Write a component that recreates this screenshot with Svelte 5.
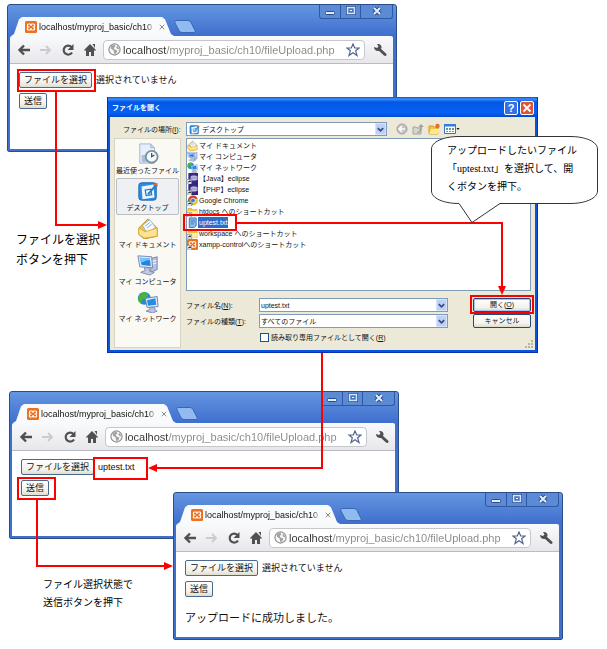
<script lang="ts">
  const host = "localhost";
  const url = host + "/myproj_basic/ch10/fileUpload.php";

  const places = [
    { icon: "recent", label: "最近使ったファイル" },
    { icon: "desktop", label: "デスクトップ" },
    { icon: "documents", label: "マイ ドキュメント" },
    { icon: "computer", label: "マイ コンピュータ" },
    { icon: "network", label: "マイ ネットワーク" },
  ];

  const files = [
    { icon: "documents", name: "マイ ドキュメント" },
    { icon: "computer", name: "マイ コンピュータ" },
    { icon: "network", name: "マイ ネットワーク" },
    { icon: "eclipse", name: "【Java】eclipse" },
    { icon: "eclipse", name: "【PHP】eclipse" },
    { icon: "chrome", name: "Google Chrome" },
    { icon: "folder", name: "htdocs へのショートカット" },
    { icon: "text", name: "uptest.txt" },
    { icon: "folder", name: "workspace へのショートカット" },
    { icon: "xampp", name: "xampp-controlへのショートカット" },
  ];

  let place = $state("デスクトップ");
  let selected = $state("uptest.txt");
</script>

{#snippet shortcut()}
  <path d="M0 14h10v10H0z" fill="#fff" stroke="#555" />
  <path d="M2 22c0-4 2-5 4-5v-2l3 3-3 3v-2c-2 0-3 1-4 3z" fill="#111" />
{/snippet}

{#snippet icon(name: string)}
  <svg class="icon" viewBox="0 0 24 24" aria-hidden="true">
    {#if name === "recent"}
      <path d="M3 1h12l4 4v17H3z" fill="#e8effa" stroke="#9db2d2" />
      <path d="M15 1v4h4" fill="#c5d5ee" stroke="#9db2d2" />
      <path d="M5 13h12v8H5z" fill="#a9bfdf" />
      <circle cx="16" cy="15" r="6.5" fill="#f3f8fa" stroke="#76909c" stroke-width="2" />
      <path d="M16 11v4l3-2" fill="none" stroke="#374b57" stroke-width="1.3" />
    {:else if name === "desktop"}
      <rect x="2" y="3" width="19" height="19" rx="3" fill="#2f8ce0" stroke="#1760ad" />
      <path d="M5 7l13-2 1 14-13 2z" fill="#e9f6ff" />
      <path d="M9 11l6-1 1 6-6 1z" fill="#fff" stroke="#287ac2" stroke-width="1.4" />
      <path d="M11 15l9-10 2 1-9 10z" fill="#297cc5" />
      <path d="M18 5l4-2 1 4z" fill="#e36d23" />
    {:else if name === "documents"}
      <path d="M2 12L12 2l10 10v9l-14 3-6-5z" fill="#efc149" stroke="#c18f24" />
      <path d="M6 9l8-6 6 8-8 8z" fill="#f5fbff" stroke="#91b8d6" />
      <path d="M9 10l5-4M11 12l5-4" stroke="#75a7cf" />
      <path d="M2 12l7 4 13-4v9L8 23l-6-4z" fill="#ffe391" stroke="#d7aa3e" />
    {:else if name === "computer"}
      <path d="M15 5l7-2v14l-7 3z" fill="#b6bfdd" stroke="#7580ac" />
      <path d="M17 8l4-1M17 11l4-1" stroke="#fff" />
      <path d="M1 2l15 1 1 12-14-1z" fill="#dee8f7" stroke="#6f86b3" />
      <path d="M3 4l11 1 1 8-10-1z" fill="#2485df" />
      <path d="M3 4l11 1v2C9 6 7 10 4 9z" fill="#73c5ff" />
      <path d="M8 15h5l1 4 5 1-5 3-10-3 5-2z" fill="#c2c9df" stroke="#7f89af" />
    {:else if name === "network"}
      <circle cx="8" cy="8" r="7" fill="#218dc9" />
      <path d="M3 3l5-2 4 3-2 4-4 1-2 5-3-4z" fill="#4cb23c" />
      <path d="M9 8l13-2 1 11-12 1z" fill="#dfe8fb" stroke="#6a7fb7" />
      <path d="M11 10l9-2 1 7-9 1z" fill="#258edf" />
      <path d="M14 18h5l1 3 2 1-5 2-7-2 4-2z" fill="#b9c2e1" stroke="#8188af" />
    {:else if name === "eclipse"}
      <path d="M3 0h21v24H3z" fill="#34277e" />
      <circle cx="15" cy="11" r="7" fill="#7b72be" />
      <path d="M8 8h15M7 11h17M8 14h15" stroke="#eeeaff" stroke-width="1.5" />
      {@render shortcut()}
    {:else if name === "chrome"}
      <circle cx="13" cy="12" r="11" fill="#eac62e" />
      <path d="M3 7a11 11 0 0120 1H13L9 15z" fill="#d93f31" />
      <path d="M3 7l6 9 5 1-3 6A11 11 0 013 7z" fill="#42a751" />
      <circle cx="13" cy="12" r="5" fill="#3c81c7" stroke="#fff" stroke-width="1.5" />
      {@render shortcut()}
    {:else if name === "folder"}
      <path d="M2 5h8l2 3h10v13H2z" fill="#efc94d" stroke="#b78c28" />
      <path d="M2 11h21l-2 10H2z" fill="#ffeb9d" />
      {@render shortcut()}
    {:else if name === "text"}
      <path d="M5 2h15v17l-4 4H5z" fill="#8bbbea" stroke="#426fae" stroke-width="2" />
      <path d="M8 7h9M8 11h9M8 15h7" stroke="#3d69a2" stroke-width="1.5" />
    {:else if name === "xampp"}
      {@render xampp()}
      {@render shortcut()}
    {/if}
  </svg>
{/snippet}

{#snippet xampp()}
  <rect width="24" height="24" rx="3" fill="#ec701f" />
  <path
    d="M7 6h3c2 0 2 2 2 4 0-2 0-4 2-4h3c3 0 3 5 0 6 3 1 3 6 0 6h-3c-2 0-2-2-2-4 0 2 0 4-2 4H7c-3 0-3-5 0-6-3-1-3-6 0-6z"
    fill="none"
    stroke="#fff"
    stroke-width="2.4"
  />
{/snippet}

{#snippet browser(id: string, fileName: string, message: string)}
  <div class="titlebar">
    <div class="tab">
      <svg class="favicon" viewBox="0 0 24 24" aria-hidden="true">{@render xampp()}</svg>
      <span class="tab-title">localhost/myproj_basic/ch10</span>
      <button class="tab-close" aria-label="タブを閉じる">
        <svg viewBox="0 0 8 8"><path d="M1 1l6 6M7 1L1 7" stroke="#888" stroke-width="1.3" /></svg>
      </button>
    </div>
    <button class="new-tab" aria-label="新しいタブ">
      <svg viewBox="0 0 22 13">
        <path d="M2 .5h12q2 0 3 2l4 8q1 2-1 2H8q-2 0-3-2L1 3Q0 .5 2 .5z" fill="#91baf0" stroke="#3868b5" />
      </svg>
    </button>
    <div class="controls">
      <button aria-label="最小化">
        <svg viewBox="0 0 12 12"><rect x="1.5" y="6.5" width="9" height="3" rx="1" fill="#e5eefc" stroke="#284d8d" /></svg>
      </button>
      <button aria-label="最大化">
        <svg viewBox="0 0 12 12">
          <rect x="2.5" y="2.5" width="7" height="6" fill="none" stroke="#284d8d" stroke-width="3" />
          <rect x="2.5" y="2.5" width="7" height="6" fill="#4878c4" stroke="#d5e4fb" stroke-width="1.5" />
          <path d="M5 5.5h2" stroke="#fff" />
        </svg>
      </button>
      <button class="wide" aria-label="閉じる">
        <svg viewBox="0 0 12 12">
          <path d="M3 3l6 6M9 3L3 9" stroke="#284d8d" stroke-width="4" />
          <path d="M3 3l6 6M9 3L3 9" stroke="#e5eefc" stroke-width="2" />
        </svg>
      </button>
    </div>
  </div>
  <div class="toolbar">
    <button class="tool" aria-label="戻る">
      <svg viewBox="0 0 14 14"><path d="M7 2.5L2.5 7 7 11.5M3 7h10" fill="none" stroke="#505050" stroke-width="2.4" /></svg>
    </button>
    <button class="tool" aria-label="進む">
      <svg viewBox="0 0 14 14"><path d="M7 3l4 4-4 4M1 7h10" fill="none" stroke="#cbcbcf" stroke-width="1.8" /></svg>
    </button>
    <button class="tool" aria-label="再読み込み">
      <svg viewBox="0 0 14 14">
        <path d="M10.5 4A4.5 4.5 0 1011 9.5" fill="none" stroke="#505050" stroke-width="2.2" />
        <path d="M12.5 1v6h-6z" fill="#505050" />
      </svg>
    </button>
    <button class="tool" aria-label="ホーム">
      <svg viewBox="0 0 14 14">
        <path d="M7 1l6 6-1 1-1-1v6H8V9H6v4H3V7L2 8 1 7z" fill="#505050" />
        <path d="M9.5 1H12v4z" fill="#505050" />
      </svg>
    </button>
    <div class="omnibox">
      <svg class="globe" viewBox="0 0 14 14" aria-hidden="true">
        <circle cx="7" cy="7" r="6" fill="#f7f7f7" stroke="#929292" stroke-width="1.3" />
        <path d="M3 3l4-1 1 2-2 1 1 2 3 1-1 3-2 1-1-4-3-2z" fill="#a1a1a1" />
        <path d="M10 3l2 3-1 1-2-2z" fill="#a1a1a1" />
      </svg>
      <input class="url" aria-label="アドレス" value={url} />
      <button class="star" aria-label="ブックマーク">
        <svg viewBox="0 0 14 14">
          <path d="M7 1l1.7 4H13L9.7 7.8 11 12.5 7 9.8 3 12.5l1.3-4.7L1 5h4.3z" fill="#fff" stroke="#53648d" stroke-width="1.2" />
        </svg>
      </button>
    </div>
    <button class="tool" aria-label="設定">
      <svg viewBox="0 0 14 14">
        <path d="M6 6l6 5.5" stroke="#505050" stroke-width="3" stroke-linecap="round" />
        <path d="M1 4l3 1 1.5-1.5L4 1c3-.5 5 1.5 4.5 4L6 8C3.5 8.5 1 7 1 4z" fill="#505050" />
      </svg>
    </button>
  </div>
  <form class="page" onsubmit={(e) => e.preventDefault()}>
    <div class="file-row">
      <button type="button" class="page-button" aria-describedby={id}>ファイルを選択</button>
      <output {id}>{fileName}</output>
    </div>
    <button class="page-button">送信</button>
    {#if message}
      <p class="message">{message}</p>
    {/if}
  </form>
{/snippet}

{#snippet arrow()}
  <span class="drop" aria-hidden="true">
    <svg viewBox="0 0 10 10"><path d="M2 3.5l3 3 3-3" fill="none" stroke="#344f80" stroke-width="2" /></svg>
  </span>
{/snippet}

<main>
  <section class="window first">
    {@render browser("file-first", "選択されていません", "")}
  </section>

  <section class="dialog" aria-labelledby="dialog-title">
    <header>
      <h1 id="dialog-title">ファイルを開く</h1>
      <button class="help" aria-label="ヘルプ">?</button>
      <button class="close" aria-label="閉じる">
        <svg viewBox="0 0 12 12"><path d="M2.5 2.5l7 7M9.5 2.5l-7 7" stroke="#fff" stroke-width="1.8" /></svg>
      </button>
    </header>

    <div class="dialog-body">
      <div class="location">
        <label for="place">ファイルの場所(<u>I</u>):</label>
        <div class="combo">
          {@render icon("desktop")}
          <select id="place" bind:value={place}>
            <option>デスクトップ</option>
          </select>
          {@render arrow()}
        </div>
        <div class="nav">
          <button aria-label="前に戻る">
            <svg viewBox="0 0 12 12">
              <circle cx="6" cy="6" r="5" fill="#c4c3bd" stroke="#a3a29c" />
              <path d="M6 3L3 6l3 3M3 6h6" fill="none" stroke="#fff" stroke-width="1.5" />
            </svg>
          </button>
          <button aria-label="一つ上へ">
            <svg viewBox="0 0 12 12">
              <path d="M1 4h3l1 1h4v6H1z" fill="#d6d5ce" stroke="#a5a49d" />
              <path d="M5 9c2 0 3-2 3-5H6l3-3 3 3h-2c0 4-2 6-5 6z" fill="#a5a49d" />
            </svg>
          </button>
          <button aria-label="新しいフォルダ">
            <svg viewBox="0 0 12 12">
              <path d="M1 3h4l1 1h4v7H1z" fill="#f2c347" stroke="#d79c24" />
              <path d="M3 6h9l-2 5H1z" fill="#ffe98d" />
              <circle cx="9.5" cy="3" r="2.2" fill="#ed6930" />
            </svg>
          </button>
          <button class="view" aria-label="表示">
            <svg viewBox="0 0 16 12">
              <path d="M.5 1.5h11v9H.5z" fill="#fff" stroke="#3a6fbd" />
              <path d="M0 1h12v2.5H0z" fill="#347bdc" />
              <path d="M2 5h2v2H2zM5 5h2v2H5zM8 5h2v2H8zM2 8h2v1H2zM5 8h2v1H5zM8 8h2v1H8z" fill="#609b91" />
              <path d="M12.5 5h3L14 7z" fill="#111" />
            </svg>
          </button>
        </div>
      </div>

      <nav class="places">
        {#each places as item}
          <button class:active={item.label === place}>
            {@render icon(item.icon)}
            <span>{item.label}</span>
          </button>
        {/each}
      </nav>

      <div class="main-area">
        <ul class="files">
          {#each files as file}
            <li>
              <button class:selected={file.name === selected} onclick={() => (selected = file.name)}>
                {@render icon(file.icon)}
                <span>{file.name}</span>
              </button>
            </li>
          {/each}
        </ul>

        <div class="fields">
          <label for="file-name">ファイル名(<u>N</u>):</label>
          <div class="combo">
            <input id="file-name" bind:value={selected} />
            {@render arrow()}
          </div>
          <button class="dialog-button default">開く(<u>O</u>)</button>

          <label for="file-type">ファイルの種類(<u>T</u>):</label>
          <div class="combo">
            <select id="file-type">
              <option>すべてのファイル</option>
            </select>
            {@render arrow()}
          </div>
          <button class="dialog-button">キャンセル</button>

          <label class="readonly">
            <input type="checkbox" />
            読み取り専用ファイルとして開く(<u>R</u>)
          </label>
        </div>
      </div>
    </div>
    <svg class="grip" viewBox="0 0 8 8" aria-hidden="true">
      <path d="M6 0h2v2H6zM3 3h2v2H3zM6 3h2v2H6zM0 6h2v2H0zM3 6h2v2H3zM6 6h2v2H6z" fill="#b8b4a2" />
    </svg>
  </section>

  <section class="window second">
    {@render browser("file-second", "uptest.txt", "")}
  </section>

  <!-- arrows and highlight frames below the last window -->
  <svg class="marks" aria-hidden="true">
    <rect x="18" y="70" width="77" height="21" />
    <path d="M56 91V225H100" />
    <path class="head" d="M107 225l-9-4v8z" />
    <rect x="184" y="215" width="52" height="15" />
    <path d="M237 223H502V288" />
    <path class="head" d="M502 295l-4-9h8z" />
    <rect x="471" y="296" width="62" height="17" />
    <path d="M322 353V468H155" />
    <path class="head" d="M148 468l9-4v8z" />
    <rect x="94" y="458" width="53" height="21" />
    <rect x="18" y="478" width="37" height="21" />
    <path d="M37 500V566H166" />
    <path class="head" d="M173 566l-9-4v8z" />
  </svg>

  <section class="window third">
    {@render browser("file-third", "選択されていません", "アップロードに成功しました。")}
  </section>

  <p class="caption choose">ファイルを選択<br />ボタンを押下</p>
  <p class="caption send">ファイル選択状態で<br />送信ボタンを押下</p>

  <aside class="callout">
    <svg viewBox="0 0 167 88" aria-hidden="true">
      <path
        d="M28 .5H139C155 .5 166.500 6 166.500 13V55C166.500 62 155 67.500 139 67.500H69L41 86.500 28 67.500C12 67.500 .5 62 .5 55V13C.5 6 12 .5 28 .5z"
        fill="#fff"
        stroke="#333"
      />
    </svg>
    <p>アップロードしたいファイル<br />「uptest.txt」を選択して、開<br />くボタンを押下。</p>
  </aside>
</main>

<style>
  :global(body) {
    background: #fff;
  }

  main {
    position: relative;
    min-height: 649px;
    overflow: hidden;
    font-family: "Liberation Sans", "Noto Sans CJK JP", sans-serif;
    color: #111;
  }

  main :global(*) {
    box-sizing: border-box;
  }

  button,
  input,
  select {
    margin: 0;
    padding: 0;
    border: 0;
    background: none;
    font: inherit;
    color: inherit;
    outline: none;
  }

  svg {
    display: block;
  }

  p,
  h1,
  ul {
    margin: 0;
    padding: 0;
  }

  /* browser windows */
  .window {
    position: absolute;
    display: flex;
    flex-direction: column;
    width: 390px;
    min-height: 148px;
    padding: 0 3px 2px 2px;
    border: 1px solid #2b4d8b;
    border-radius: 3px 3px 2px 2px;
    background: linear-gradient(#6496e0, #4070ce 30px);
  }

  .first {
    left: 7px;
    top: 4px;
  }

  .second {
    left: 9px;
    top: 391px;
  }

  .third {
    left: 173px;
    top: 492px;
  }

  .titlebar {
    display: flex;
    align-items: flex-end;
    height: 31px;
    padding-left: 1px;
  }

  .tab {
    display: flex;
    align-items: center;
    gap: 2px;
    width: 163px;
    height: 19px;
    padding: 0 7px 0 14px;
    background: #f9fafc;
    clip-path: polygon(0 100%, 3px 90%, 8px 12%, 11px 0, calc(100% - 12px) 0, calc(100% - 9px) 12%, calc(100% - 3px) 90%, 100% 100%);
  }

  .favicon {
    flex: none;
    width: 12px;
    height: 12px;
  }

  .tab-title {
    flex: 1;
    white-space: nowrap;
    font-size: 9px;
    line-height: 12px;
    mask-image: linear-gradient(to right, #000 92%, transparent);
  }

  .tab-close {
    flex: none;
    width: 10px;
    padding: 2px;
  }

  .new-tab {
    width: 22px;
    margin-bottom: 3px;
  }

  .controls {
    display: flex;
    align-self: flex-start;
    margin-left: auto;
    border: 1px solid #2f58a2;
    border-top: 0;
    border-radius: 0 0 3px 3px;
    background: #5c8bd6;
  }

  .controls button {
    display: flex;
    justify-content: center;
    width: 20px;
    height: 13px;
  }

  .controls button + button {
    border-left: 1px solid #2f58a2;
  }

  .controls .wide {
    width: 32px;
  }

  .controls svg {
    width: 12px;
    height: 12px;
  }

  .toolbar {
    display: flex;
    align-items: center;
    gap: 8px;
    height: 28px;
    padding: 0 6px 0 7px;
    border-bottom: 1px solid #b9bcc4;
    border-radius: 2px 2px 0 0;
    background: linear-gradient(#f9fafc, #e7e7eb);
  }

  .tool {
    flex: none;
    width: 14px;
  }

  .omnibox {
    display: flex;
    flex: 1;
    align-items: center;
    gap: 2px;
    height: 20px;
    margin-left: -2px;
    padding: 0 4px;
    border: 1px solid #c5c7cd;
    border-radius: 4px;
    background: #fff;
  }

  .globe {
    flex: none;
    width: 13px;
  }

  /* host part is dark, the path is grey */
  .url {
    flex: 1;
    min-width: 0;
    font-size: 11px;
    line-height: 16px;
    color: transparent;
    background: linear-gradient(to right, #333 43px, #888 43px);
    background-clip: text;
  }

  .star {
    flex: none;
    width: 14px;
  }

  .page {
    flex: 1;
    padding: 8px 9px;
    background: #fff;
    font-size: 9px;
    line-height: 14px;
  }

  .file-row {
    display: flex;
    align-items: center;
    gap: 4px;
    margin-bottom: 5px;
  }

  .page-button {
    display: block;
    height: 16px;
    padding: 0 4px;
    border: 1px solid #49698e;
    border-radius: 2px;
    background: linear-gradient(#fff, #f2f1ea 70%, #deddd0);
    line-height: 12px;
  }

  .message {
    margin-top: 12px;
    font-size: 11px;
    line-height: 18px;
  }

  /* file dialog */
  .dialog {
    position: absolute;
    left: 107px;
    top: 97px;
    width: 431px;
    border: 1px solid #0831b5;
    border-width: 0 1px 1px;
    background: #0855dd;
    padding: 0 2px 2px;
    font-size: 7px;
    line-height: 11px;
  }

  header {
    display: flex;
    align-items: center;
    gap: 2px;
    height: 20px;
    margin: 0 -2px;
    padding: 2px 3px 0 4px;
    background: linear-gradient(#0b4fc8, #3a91ff 2px, #0457e4 5px, #0462f5 16px, #0048cc);
  }

  h1 {
    flex: 1;
    font-size: 7px;
    line-height: 12px;
    color: #fff;
  }

  header button {
    width: 14px;
    height: 14px;
    border: 1px solid #fff;
    border-radius: 2px;
    background: #3870e4;
    color: #fff;
  }

  .help {
    font-size: 11px;
    font-weight: bold;
    line-height: 12px;
  }

  header .close {
    background: #e15534;
  }

  .dialog-body {
    display: grid;
    grid-template-columns: 67px 1fr;
    column-gap: 5px;
    padding: 3px 4px 2px;
    background: #ece9d8;
  }

  .location {
    grid-column: 1 / -1;
    display: flex;
    align-items: center;
    height: 18px;
    padding-left: 9px;
  }

  .location label {
    flex: none;
    width: 63px;
  }

  .combo {
    display: flex;
    align-items: center;
    height: 14px;
    border: 1px solid #7f9db9;
    background: #fff;
  }

  .location .combo {
    width: 201px;
    padding-left: 2px;
    gap: 2px;
  }

  .combo select,
  .combo input {
    flex: 1;
    min-width: 0;
    height: 12px;
    appearance: none;
  }

  .icon {
    flex: none;
    width: 11px;
    height: 11px;
  }

  .drop {
    width: 11px;
    height: 12px;
    padding: 1px 0;
    border: 1px solid #d9e4fc;
    background: #bdd0f8;
  }

  .drop svg {
    width: 9px;
    height: 9px;
  }

  .nav {
    display: flex;
    gap: 4px;
    margin-left: 9px;
  }

  .nav button {
    width: 12px;
  }

  .nav .view {
    width: 16px;
  }

  .places {
    padding: 2px 1px;
    border: 1px solid #d8d4c4;
    background: #fbf9f4;
  }

  .places button {
    display: flex;
    flex-direction: column;
    align-items: center;
    width: 100%;
    height: 37px;
    padding-top: 1px;
    border: 1px solid transparent;
    border-radius: 2px;
    white-space: nowrap;
  }

  .places .active {
    border-color: #b9bdc4;
    background: #eef0f3;
  }

  .places .icon {
    width: 22px;
    height: 22px;
  }

  .files {
    height: 153px;
    padding: 1px 0;
    border: 1px solid #7f9db9;
    background: #fff;
    list-style: none;
  }

  .files button {
    display: flex;
    align-items: center;
    height: 11px;
  }

  .files span {
    padding: 0 1px;
    white-space: nowrap;
  }

  .files .selected span {
    background: #316ac5;
    color: #fff;
  }

  .fields {
    display: grid;
    grid-template-columns: 73px 189px 1fr;
    align-items: center;
    row-gap: 2px;
    padding: 7px 0 5px;
  }

  .fields .combo input,
  .fields .combo select {
    padding-left: 1px;
  }

  .dialog-button {
    justify-self: end;
    width: 58px;
    height: 14px;
    border: 1px solid #24477d;
    border-radius: 2px;
    background: linear-gradient(#fff, #f3f2eb 70%, #dedbce);
    line-height: 10px;
  }

  .default {
    box-shadow: inset 0 0 0 1px #a9c4f0;
  }

  .readonly {
    grid-column: 2 / -1;
    display: flex;
    align-items: center;
    margin-top: 2px;
    white-space: nowrap;
  }

  .readonly input {
    width: 9px;
    height: 9px;
    margin: 0 2px 0 1px;
    border: 1px solid #1c5180;
    background: #fff;
    appearance: none;
  }

  .grip {
    position: absolute;
    right: 4px;
    bottom: 4px;
    width: 8px;
    height: 8px;
  }

  /* annotations */
  .marks {
    position: absolute;
    left: 0;
    top: 0;
    width: 100%;
    height: 100%;
    pointer-events: none;
    fill: none;
    stroke: #f00;
    stroke-width: 2;
  }

  .head {
    fill: #f00;
    stroke: none;
  }

  .caption {
    position: absolute;
    color: #000;
    white-space: nowrap;
  }

  .choose {
    left: 16px;
    top: 230px;
    font-size: 12px;
    line-height: 20px;
  }

  .send {
    left: 43px;
    top: 576px;
    font-size: 10px;
    line-height: 18px;
  }

  .callout {
    position: absolute;
    left: 431px;
    top: 136px;
    width: 167px;
    padding: 6px 0 0 16px;
    font-family: "Liberation Serif", "Noto Sans CJK JP", serif;
    font-size: 10px;
    line-height: 18px;
    color: #000;
  }

  .callout svg {
    position: absolute;
    left: 0;
    top: 0;
    width: 167px;
    height: 88px;
  }

  .callout p {
    position: relative;
    white-space: nowrap;
  }
</style>
